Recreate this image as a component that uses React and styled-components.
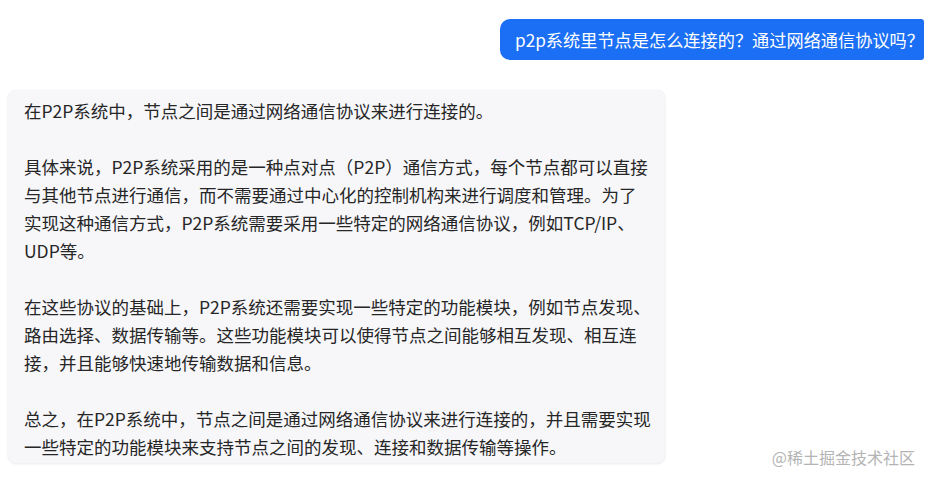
import React from "react";
import styled, { createGlobalStyle } from "styled-components";

const GlobalStyle = createGlobalStyle`
  html, body {
    margin: 0;
    padding: 0;
    background: #ffffff;
  }
  body {
    font-family: "Noto Sans CJK SC", "Noto Sans", sans-serif;
  }
`;

const Page = styled.div`
  position: relative;
  width: 926px;
  height: 481px;
  box-sizing: border-box;
  padding: 19px 2px 0 8px;
  overflow: hidden;
`;

const ChatList = styled.div`
  display: flex;
  flex-direction: column;
  gap: 30px;
`;

const Row = styled.div`
  display: flex;
  justify-content: ${(p) => (p.$mine ? "flex-end" : "flex-start")};
`;

const UserBubble = styled.div`
  box-sizing: border-box;
  height: 41px;
  padding: 0 0 0 15px;
  display: flex;
  align-items: center;
  background: #1b6ff5;
  color: #ffffff;
  font-size: 17.2px;
  border-radius: 10px 3px 3px 10px;
  white-space: nowrap;
`;

const AnswerBubble = styled.div`
  box-sizing: border-box;
  width: 657px;
  padding: 7px 16px 2px;
  background: #f7f7fa;
  color: #262626;
  border-radius: 8px;
  box-shadow: 0 1px 3px rgba(0, 0, 0, 0.08), 0 0 1px rgba(0, 0, 0, 0.08);
`;

const Paragraph = styled.p`
  margin: 0;
  font-size: 17.5px;
  line-height: 28px;
  white-space: nowrap;

  & + & {
    margin-top: 28px;
  }
`;

const Watermark = styled.div`
  position: absolute;
  right: 11px;
  bottom: 12px;
  font-size: 16px;
  color: #b4b4b4;
`;

const answer = [
  ["在P2P系统中，节点之间是通过网络通信协议来进行连接的。"],
  [
    "具体来说，P2P系统采用的是一种点对点（P2P）通信方式，每个节点都可以直接",
    "与其他节点进行通信，而不需要通过中心化的控制机构来进行调度和管理。为了",
    "实现这种通信方式，P2P系统需要采用一些特定的网络通信协议，例如TCP/IP、",
    "UDP等。",
  ],
  [
    "在这些协议的基础上，P2P系统还需要实现一些特定的功能模块，例如节点发现、",
    "路由选择、数据传输等。这些功能模块可以使得节点之间能够相互发现、相互连",
    "接，并且能够快速地传输数据和信息。",
  ],
  [
    "总之，在P2P系统中，节点之间是通过网络通信协议来进行连接的，并且需要实现",
    "一些特定的功能模块来支持节点之间的发现、连接和数据传输等操作。",
  ],
];

export default function App() {
  return (
    <>
      <GlobalStyle />
      <Page>
        <ChatList>
          <Row $mine>
            <UserBubble>p2p系统里节点是怎么连接的？通过网络通信协议吗？</UserBubble>
          </Row>
          <Row>
            <AnswerBubble>
              {answer.map((lines, i) => (
                <Paragraph key={i}>
                  {lines.map((line, j) => (
                    <React.Fragment key={j}>
                      {j > 0 && <br />}
                      {line}
                    </React.Fragment>
                  ))}
                </Paragraph>
              ))}
            </AnswerBubble>
          </Row>
        </ChatList>
        <Watermark>@稀土掘金技术社区</Watermark>
      </Page>
    </>
  );
}
